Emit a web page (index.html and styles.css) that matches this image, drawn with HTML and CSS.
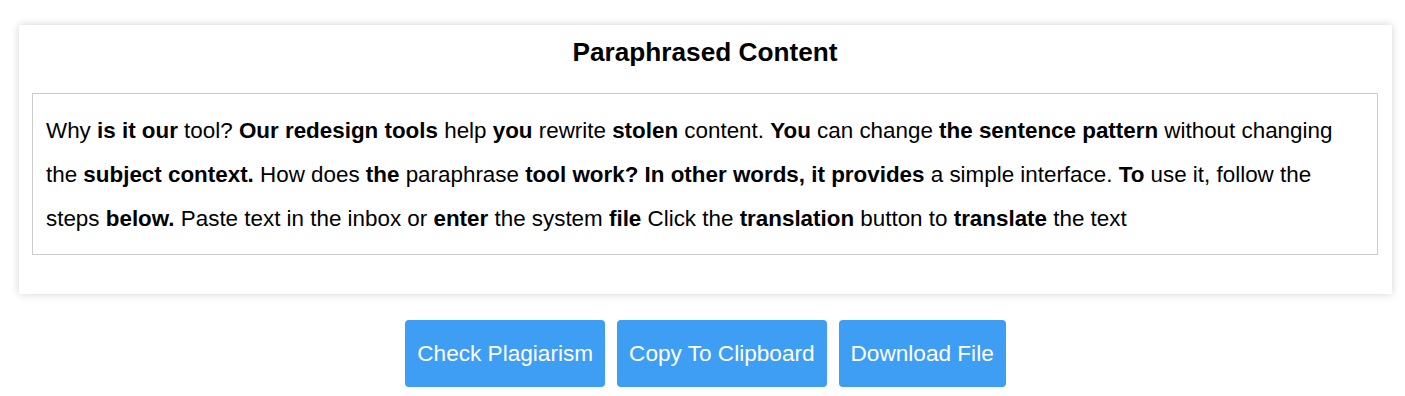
FILE: index.html
```html
<!DOCTYPE html>
<html lang="en">
<head>
    <meta charset="UTF-8">
    <meta name="viewport" content="width=device-width, initial-scale=1.0">
    <title>Paraphrased Content</title>
    <link rel="stylesheet" href="styles.css">
</head>
<body>
    <div class="card">
        <h2>Paraphrased Content</h2>
        <div class="output">
            Why <b>is it our</b> tool? <b>Our redesign tools</b> help <b>you</b> rewrite <b>stolen</b> content. <b>You</b> can change <b>the sentence pattern</b> without changing the <b>subject context.</b> How does <b>the</b> paraphrase <b>tool work? In other words, it provides</b> a simple interface. <b>To</b> use it, follow the steps <b>below.</b> Paste text in the inbox or <b>enter</b> the system <b>file</b> Click the <b>translation</b> button to <b>translate</b> the text
        </div>
    </div>
    <div class="actions">
        <button type="button">Check Plagiarism</button>
        <button type="button">Copy To Clipboard</button>
        <button type="button">Download File</button>
    </div>
</body>
</html>
```

FILE: styles.css
```css
body {
    font-family: "Liberation Sans", Arial, sans-serif;
    background-color: #fff;
    color: #000;
    margin: 0;
    padding: 25px 13px 0 19px;
}

.card {
    background-color: white;
    padding: 12px 14px 39px 13px;
    box-shadow: 0 0 8px rgba(0, 0, 0, 0.18);
}

h2 {
    font-size: 26.2px;
    text-align: center;
    margin: 0 0 26px 0;
    line-height: 30px;
}

.output {
    border: 1px solid #ccc;
    padding: 15px 13px 13px 13px;
    font-size: 22.4px;
    line-height: 44px;
}

.actions {
    display: flex;
    justify-content: center;
    gap: 12px;
    margin-top: 26px;
}

button {
    font-family: inherit;
    background-color: #3d9ef4;
    color: white;
    font-size: 22.6px;
    padding: 20px 12px;
    border: none;
    border-radius: 4px;
    cursor: pointer;
    line-height: 27px;
}

button:hover {
    background-color: #2b8ce0;
}
```
